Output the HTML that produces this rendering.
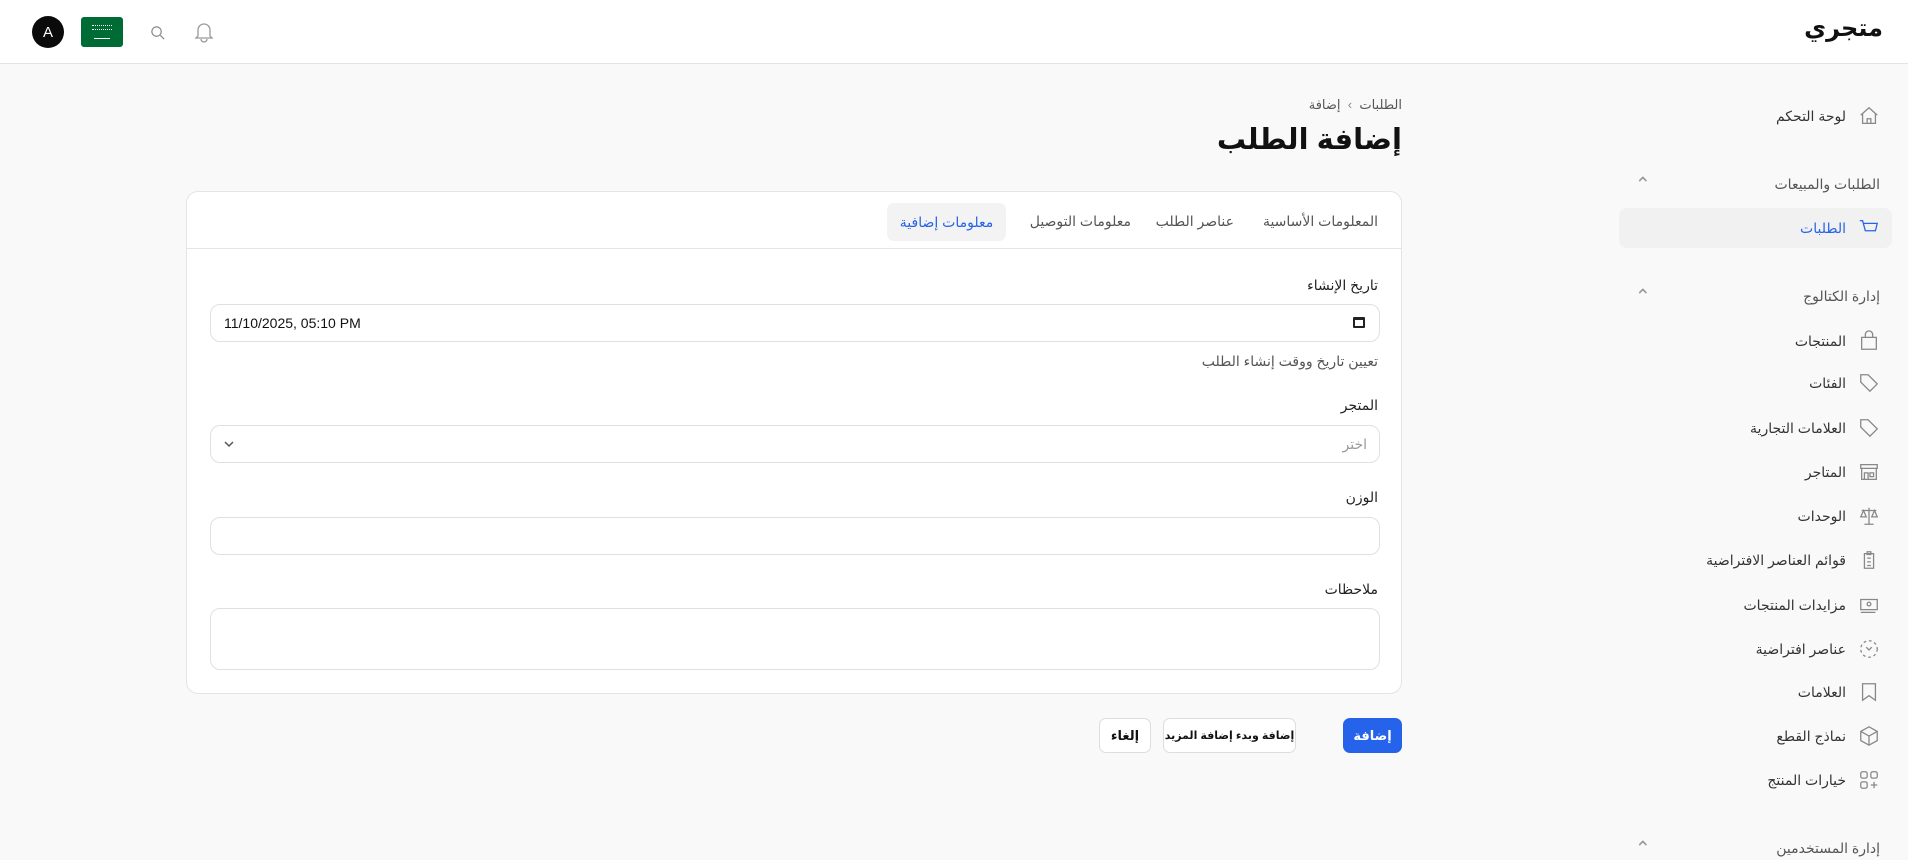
<!DOCTYPE html>
<html dir="rtl"><head><meta charset="utf-8"><style>
*{box-sizing:border-box;margin:0;padding:0}
body{width:1908px;height:860px;overflow:hidden;background:#f9f9f9;font-family:"Liberation Sans","DejaVu Sans",sans-serif;color:#222;position:relative;font-size:14px}
.abs{position:absolute}
header{position:absolute;left:0;top:0;width:1908px;height:64px;background:#fff;border-bottom:1px solid #e3e3e3}
.logo{right:25px;top:14px;font-size:24px;font-weight:bold;color:#111}
.side{color:#333;font-size:14px}
.item{position:absolute;right:16px;width:273px;height:40px;display:flex;align-items:center;border-radius:8px}
.item svg{margin-right:12px;margin-left:12px;width:22px;height:22px;stroke:#888;fill:none;stroke-width:1.4}
.sec{position:absolute;right:28px;width:243px;color:#555;font-size:14px;display:flex;justify-content:space-between}
.card{left:186px;top:191px;width:1216px;height:503px;background:#fff;border:1px solid #e4e4e4;border-radius:12px}
.lbl{position:absolute;right:23px;font-size:14px;color:#222}
.inp{position:absolute;left:23px;width:1170px;border:1px solid #e0e0e0;border-radius:10px;background:#fff}
.tab{position:absolute;top:21px;font-size:14px;color:#555}
.btn{position:absolute;top:718px;height:35px;border-radius:7px;border:1px solid #ddd;background:#fff;font-weight:bold;font-size:13px;display:flex;align-items:center;justify-content:center;white-space:nowrap}
.chev{color:#999;display:inline-block;transform:scale(1.4)}
</style></head><body>
<header>
<div class="abs logo">متجري</div>
<div class="abs" style="left:32px;top:16px;width:32px;height:32px;border-radius:50%;background:#0b0b0b;color:#fff;font-size:15px;display:flex;align-items:center;justify-content:center;direction:ltr">A</div>
<div class="abs" style="left:81px;top:17px;width:42px;height:30px;border-radius:3px;background:#006c35"><div style="position:absolute;left:11px;top:8px;width:20px;height:5px;border-top:1px dotted #fff;border-bottom:1px dotted #fff"></div><div style="position:absolute;left:13px;top:21px;width:16px;height:1px;background:#fff"></div></div>
<svg class="abs" style="left:150px;top:25px" width="15" height="15" viewBox="0 0 16 16" fill="none" stroke="#888" stroke-width="1.3"><circle cx="7" cy="7" r="5"/><path d="M11 11l4 4"/></svg>
<svg class="abs" style="left:194px;top:21px" width="20" height="22" viewBox="0 0 20 22" fill="none" stroke="#999" stroke-width="1.3"><path d="M4 15V9a6 6 0 0112 0v6l2 2H2z"/><path d="M7 18a3 3 0 006 0"/></svg>
</header>

<div class="side">
<div class="item" style="top:96px"><svg viewBox="0 0 24 24"><path d="M3 11l9-8 9 8M5 9v11h14V9M10 20v-5h4v5"/></svg>لوحة التحكم</div>
<div class="sec" style="top:176px"><span>الطلبات والمبيعات</span><span class="chev">⌃</span></div>
<div class="item" style="top:208px;background:#f1f1f1;color:#2563eb"><svg viewBox="0 0 24 24" style="stroke:#2563eb"><path d="M2 4h3l3 11h11l2-8H6M9 20h.01M17 20h.01"/></svg>الطلبات</div>
<div class="sec" style="top:288px"><span>إدارة الكتالوج</span><span class="chev">⌃</span></div>
<div class="item" style="top:321px"><svg viewBox="0 0 24 24"><path d="M4 8h16v13H4zM8 8V5a4 4 0 018 0v3"/></svg>المنتجات</div>
<div class="item" style="top:363px"><svg viewBox="0 0 24 24"><path d="M3 3h8l10 10-8 8L3 11zM7 7h.01"/></svg>الفئات</div>
<div class="item" style="top:408px"><svg viewBox="0 0 24 24"><path d="M3 3h8l10 10-8 8L3 11zM7 7h.01"/></svg>العلامات التجارية</div>
<div class="item" style="top:452px"><svg viewBox="0 0 24 24"><path d="M3 4h18v4H3zM4 8v12h16V8M7 20v-7h4v7M13 13h4v4h-4z"/></svg>المتاجر</div>
<div class="item" style="top:496px"><svg viewBox="0 0 24 24"><path d="M12 3v18M7 21h10M4 6h16M6 6l-3 7h6zM18 6l-3 7h6z"/></svg>الوحدات</div>
<div class="item" style="top:540px"><svg viewBox="0 0 24 24"><path d="M7 5h10v16H7zM10 3h4v3h-4zM10 10h4M10 14h4M10 18h4"/></svg>قوائم العناصر الافتراضية</div>
<div class="item" style="top:585px"><svg viewBox="0 0 24 24"><path d="M3 6h18v11H3zM3 20h16"/><circle cx="12" cy="11" r="2"/></svg>مزايدات المنتجات</div>
<div class="item" style="top:629px"><svg viewBox="0 0 24 24" stroke-dasharray="3 3"><circle cx="12" cy="12" r="9"/><path d="M9 10l3 3 3-3" stroke-dasharray="none"/></svg>عناصر افتراضية</div>
<div class="item" style="top:672px"><svg viewBox="0 0 24 24"><path d="M5 3h14v18l-7-5-7 5z"/></svg>العلامات</div>
<div class="item" style="top:716px"><svg viewBox="0 0 24 24"><path d="M12 2l9 5v10l-9 5-9-5V7zM3 7l9 5 9-5M12 12v10"/></svg>نماذج القطع</div>
<div class="item" style="top:760px"><svg viewBox="0 0 24 24"><rect x="3" y="3" width="7" height="7" rx="2"/><rect x="14" y="3" width="7" height="7" rx="2"/><rect x="3" y="14" width="7" height="7" rx="2"/><path d="M17.5 14v7M14 17.5h7"/></svg>خيارات المنتج</div>
<div class="sec" style="top:840px"><span>إدارة المستخدمين</span><span class="chev">⌃</span></div>
</div>

<div class="abs" style="right:506px;top:97px;font-size:13px;color:#555">الطلبات &nbsp;<span style="color:#888">›</span>&nbsp; إضافة</div>
<div class="abs" style="right:506px;top:122px;font-size:29px;font-weight:bold;color:#111">إضافة الطلب</div>

<div class="abs card">
<div style="position:absolute;left:0;right:0;top:56px;border-top:1px solid #e4e4e4"></div>
<div class="tab" style="right:23px">المعلومات الأساسية</div>
<div class="tab" style="right:167px">عناصر الطلب</div>
<div class="tab" style="right:270px">معلومات التوصيل</div>
<div class="abs" style="left:700px;top:11px;width:119px;height:38px;background:#f3f3f3;border-radius:7px;color:#2563eb;display:flex;align-items:center;justify-content:center;font-size:14px">معلومات إضافية</div>

<div class="lbl" style="top:85px">تاريخ الإنشاء</div>
<div class="inp" style="top:112px;height:38px"><span style="position:absolute;left:13px;top:10px;direction:ltr;font-size:14px;color:#111">11/10/2025, 05:10 PM</span><span style="position:absolute;right:14px;top:12px;width:12px;height:11px;border:2px solid #222;border-top-width:3px;border-radius:1px"></span></div>
<div class="lbl" style="top:161px;color:#555">تعيين تاريخ ووقت إنشاء الطلب</div>
<div class="lbl" style="top:205px">المتجر</div>
<div class="inp" style="top:233px;height:38px"><span style="position:absolute;right:12px;top:10px;color:#999">اختر</span><svg style="position:absolute;left:12px;top:14px" width="12" height="8" viewBox="0 0 12 8" fill="none" stroke="#555" stroke-width="1.5"><path d="M2 2l4 4 4-4"/></svg></div>
<div class="lbl" style="top:297px">الوزن</div>
<div class="inp" style="top:325px;height:38px"></div>
<div class="lbl" style="top:389px">ملاحظات</div>
<div class="inp" style="top:416px;height:62px"></div>
</div>

<div class="btn" style="left:1343px;width:59px;background:#2563eb;border-color:#2563eb;color:#fff">إضافة</div>
<div class="btn" style="left:1163px;width:133px;color:#111;font-size:11px">إضافة وبدء إضافة المزيد</div>
<div class="btn" style="left:1099px;width:52px;color:#111">إلغاء</div>
</body></html>
